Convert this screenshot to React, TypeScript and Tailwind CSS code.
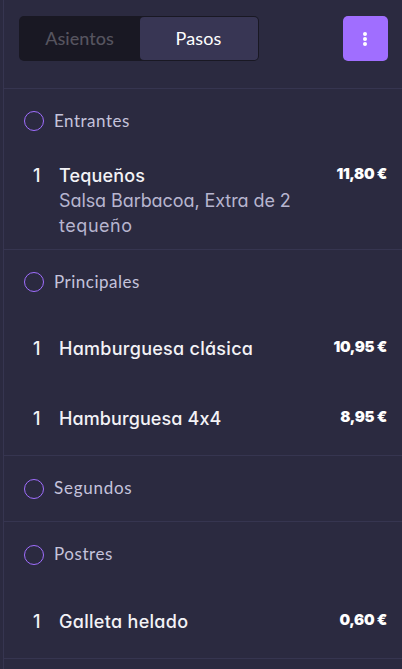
type Item = { name: string; tracking: string; extras?: { text: string; tracking: string }[]; price: string };
type Course = { title: string; tracking: string; height: string; header: string; items: Item[] };

const courses: Course[] = [
  {
    title: 'Entrantes',
    tracking: 'tracking-[0.5px]',
    height: 'h-[161px]',
    header: 'h-[65px] pt-[22px]',
    items: [
      {
        name: 'Tequeños',
        tracking: 'tracking-[0.15px]',
        extras: [
          { text: 'Salsa Barbacoa, Extra de 2', tracking: 'tracking-[-0.08px]' },
          { text: 'tequeño', tracking: 'tracking-[0.55px]' },
        ],
        price: '11,80 €',
      },
    ],
  },
  {
    title: 'Principales',
    tracking: 'tracking-[0.5px]',
    height: 'h-[206px]',
    header: 'h-[65px] pt-[22px]',
    items: [
      { name: 'Hamburguesa clásica', tracking: 'tracking-[0.27px]', price: '10,95 €' },
      { name: 'Hamburguesa 4x4', tracking: 'tracking-[0.1px]', price: '8,95 €' },
    ],
  },
  {
    title: 'Segundos',
    tracking: 'tracking-[0.75px] -mt-px',
    height: 'h-[66px]',
    header: 'h-[65px] pt-[23px]',
    items: [],
  },
  {
    title: 'Postres',
    tracking: 'tracking-[0.55px] -mt-px',
    height: 'h-[137px]',
    header: 'h-[66px] pt-[23px]',
    items: [{ name: 'Galleta helado', tracking: 'tracking-[0.3px]', price: '0,60 €' }],
  },
];

function Row({ item }: { item: Item }) {
  return (
    <div
      className={`flex items-center pr-[15px] font-[Inter,sans-serif] [font-feature-settings:'cv11','calt'_0] ${item.extras ? 'h-[95px] pb-[2px]' : 'h-[70px] pb-[3px]'}`}
    >
      <div className="flex w-full items-start text-[18px] leading-[25px] font-medium text-[#f3f2f6]">
        <span className="w-[55px] pl-[29px]">1</span>
        <div className="flex-1 whitespace-nowrap">
          <div className={item.tracking}>{item.name}</div>
          {item.extras?.map((e) => (
            <div key={e.text} className={`font-normal text-[#b7b5cf] ${e.tracking}`}>
              {e.text}
            </div>
          ))}
        </div>
        <span className="pt-px text-[15px] leading-[19px] font-black tracking-[-0.35px] whitespace-nowrap text-white">
          {item.price}
        </span>
      </div>
    </div>
  );
}

export default function App() {
  return (
    <div className="h-[669px] w-[402px] overflow-hidden bg-[#2b2a40] pl-[3px] font-[Lato,sans-serif]">
      <main className="h-full border-l border-[#363550]">
        <header className="flex h-[89px] items-start justify-between border-b border-[#363550] pt-4 pr-[14px] pl-[15px]">
          <div className="flex h-[45px] w-[240px] rounded-[5px] bg-[#191823] p-px text-[18px]">
            <button className="w-[120px] pr-px font-medium text-[#56545f]">Asientos</button>
            <button className="flex-1 rounded-[4px] bg-[#383654] pr-px tracking-[0.1px] text-white">Pasos</button>
          </div>
          <button className="flex size-[45px] items-center justify-center rounded-[5px] bg-[#a06eff] pr-px">
            <svg width="4" height="14" viewBox="0 0 4 14" fill="white">
              <circle cx="2" cy="2" r="2" />
              <circle cx="2" cy="7" r="2" />
              <circle cx="2" cy="12" r="2" />
            </svg>
          </button>
        </header>
        {courses.map((c) => (
          <section key={c.title} className={`border-b border-[#363550] ${c.height}`}>
            <div className={`flex items-start gap-[10px] pl-5 ${c.header}`}>
              <span className="size-5 rounded-full border border-[#a06eff]" />
              <h2 className={`text-[17px] leading-5 text-[#c5c3dc] ${c.tracking}`}>{c.title}</h2>
            </div>
            {c.items.map((i) => (
              <Row key={i.name} item={i} />
            ))}
          </section>
        ))}
      </main>
    </div>
  );
}
